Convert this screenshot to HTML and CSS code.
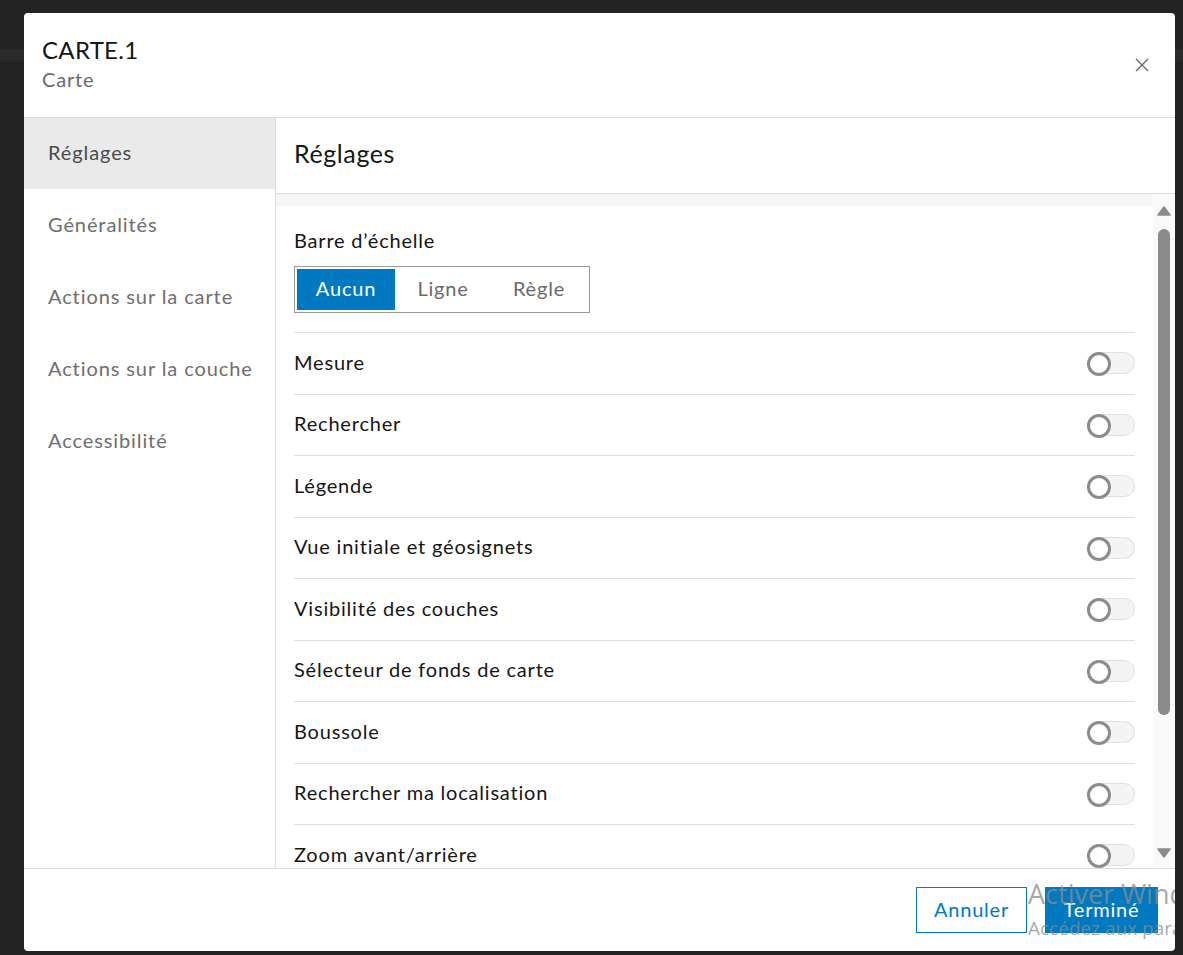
FILE: index.html
```html
<!DOCTYPE html>
<html lang="fr">
<head>
<meta charset="utf-8">
<title>CARTE.1</title>
<link rel="stylesheet" href="styles.css">
</head>
<body>
<div class="backdrop-band"></div>
<div class="dialog">
  <header class="dlg-header">
    <div class="titles">
      <div class="title">CARTE.1</div>
      <div class="subtitle">Carte</div>
    </div>
    <button class="close" aria-label="Fermer">
      <svg width="14" height="14" viewBox="0 0 14 14"><path d="M1 1 L13 13 M13 1 L1 13" stroke="#6a6a6a" stroke-width="1.4" fill="none"/></svg>
    </button>
  </header>
  <div class="dlg-body">
    <nav class="sidebar">
      <div class="nav-item active">Réglages</div>
      <div class="nav-item">Généralités</div>
      <div class="nav-item">Actions sur la carte</div>
      <div class="nav-item">Actions sur la couche</div>
      <div class="nav-item">Accessibilité</div>
    </nav>
    <section class="main">
      <div class="main-header">Réglages</div>
      <div class="scroller">
        <div class="content">
          <div class="strip"></div>
          <div class="inner">
            <div class="scale">
              <div class="label">Barre d’échelle</div>
              <div class="segmented">
                <div class="seg active">Aucun</div>
                <div class="seg">Ligne</div>
                <div class="seg">Règle</div>
              </div>
            </div>
            <div class="row"><span>Mesure</span><span class="toggle"><span class="knob"></span></span></div>
            <div class="row"><span>Rechercher</span><span class="toggle"><span class="knob"></span></span></div>
            <div class="row"><span>Légende</span><span class="toggle"><span class="knob"></span></span></div>
            <div class="row"><span>Vue initiale et géosignets</span><span class="toggle"><span class="knob"></span></span></div>
            <div class="row"><span>Visibilité des couches</span><span class="toggle"><span class="knob"></span></span></div>
            <div class="row"><span>Sélecteur de fonds de carte</span><span class="toggle"><span class="knob"></span></span></div>
            <div class="row"><span>Boussole</span><span class="toggle"><span class="knob"></span></span></div>
            <div class="row"><span>Rechercher ma localisation</span><span class="toggle"><span class="knob"></span></span></div>
            <div class="row"><span>Zoom avant/arrière</span><span class="toggle"><span class="knob"></span></span></div>
            <div class="row"><span>Plein écran</span><span class="toggle"><span class="knob"></span></span></div>
          </div>
        </div>
        <div class="scrollbar">
          <svg class="arrow" width="14" height="10" viewBox="0 0 14 10"><path d="M7 1 L13 9 L1 9 Z" fill="#8b8b8b" stroke="#8b8b8b" stroke-linejoin="round" stroke-width="1.5"/></svg>
          <div class="track"><div class="thumb"></div></div>
          <svg class="arrow" width="14" height="10" viewBox="0 0 14 10"><path d="M1 1 L13 1 L7 9 Z" fill="#8b8b8b" stroke="#8b8b8b" stroke-linejoin="round" stroke-width="1.5"/></svg>
        </div>
      </div>
    </section>
  </div>
  <footer class="dlg-footer">
    <button class="btn btn-outline">Annuler</button>
    <button class="btn btn-primary">Terminé</button>
  </footer>
</div>
<div class="watermark">
  <div class="wm-title">Activer Windows</div>
  <div class="wm-sub">Accédez aux paramètres pour activer Windows.</div>
</div>
</body>
</html>
```
FILE: styles.css
```css
html, body {
  margin: 0;
  padding: 0;
  height: 100%;
  overflow: hidden;
}
body {
  background: #232323;
  font-family: "Lato", "Noto Sans", sans-serif;
  letter-spacing: 0.8px;
  color: #151515;
  padding: 13px 0 0 24px;
  box-sizing: border-box;
  position: relative;
}
.backdrop-band {
  position: absolute;
  left: 0;
  right: 0;
  top: 49px;
  height: 12px;
  background: #2a2a2a;
}
.dialog {
  position: relative;
  width: 1151px;
  height: 938px;
  background: #fff;
  border-radius: 4px;
  display: flex;
  flex-direction: column;
  overflow: hidden;
}
.dlg-header {
  height: 105px;
  flex: none;
  box-sizing: border-box;
  border-bottom: 1px solid #dcdcdc;
  display: flex;
  align-items: center;
  justify-content: space-between;
  padding: 0 26px 3px 18px;
}
.title {
  font-size: 24px;
  line-height: 30px;
  letter-spacing: 0.3px;
  color: #151515;
}
.subtitle {
  font-size: 20px;
  line-height: 26px;
  color: #6a6a6a;
  margin-top: 1px;
}
.close {
  border: 0;
  background: none;
  padding: 0;
  width: 14px;
  height: 14px;
  display: flex;
  margin-top: 3px;
}
.dlg-body {
  flex: none;
  height: 751px;
  box-sizing: border-box;
  border-bottom: 1px solid #dcdcdc;
  display: flex;
}
.sidebar {
  width: 252px;
  flex: none;
  box-sizing: border-box;
  border-right: 1px solid #dcdcdc;
}
.nav-item {
  height: 72px;
  box-sizing: border-box;
  display: flex;
  align-items: center;
  padding: 0 0 3px 24px;
  font-size: 20px;
  letter-spacing: 0.9px;
  color: #6e6e6e;
}
.nav-item.active {
  background: #eaeaea;
  color: #4a4a4a;
  height: 71px;
}
.main {
  flex: 1;
  display: flex;
  flex-direction: column;
  min-width: 0;
}
.main-header {
  height: 76px;
  flex: none;
  box-sizing: border-box;
  border-bottom: 1px solid #dcdcdc;
  display: flex;
  align-items: center;
  padding: 0 0 5px 18px;
  font-size: 25px;
  letter-spacing: 0.6px;
  color: #151515;
}
.scroller {
  flex: 1;
  display: flex;
  min-height: 0;
  overflow: hidden;
}
.content {
  flex: 1;
  min-width: 0;
  overflow: hidden;
}
.strip {
  height: 12px;
  background: #f6f6f6;
}
.inner {
  padding: 0 18px;
}
.scale {
  padding-top: 21px;
  padding-bottom: 19px;
  border-bottom: 1px solid #dedede;
}
.label {
  font-size: 20px;
  line-height: 26px;
  color: #151515;
}
.segmented {
  margin-top: 13px;
  display: inline-flex;
  border: 1px solid #9a9a9a;
  padding: 2px;
}
.seg {
  width: 96px;
  height: 41px;
  box-sizing: border-box;
  padding-bottom: 3px;
  display: flex;
  align-items: center;
  justify-content: center;
  font-size: 20px;
  color: #6a6a6a;
}
.seg.active {
  width: 98px;
  background: #0079c1;
  color: #fff;
}
.row {
  height: 60.5px;
  box-sizing: content-box;
  border-bottom: 1px solid #dedede;
  display: flex;
  align-items: center;
  justify-content: space-between;
  font-size: 20px;
  color: #151515;
}
.row > span:first-child {
  margin-bottom: 3px;
}
.toggle {
  position: relative;
  width: 48px;
  height: 22px;
  box-sizing: border-box;
  border: 1px solid #e0e0e0;
  background: #f4f4f4;
  border-radius: 12px;
}
.knob {
  position: absolute;
  left: -1px;
  top: -1px;
  width: 24px;
  height: 24px;
  box-sizing: border-box;
  border: 3px solid #8c8c8c;
  border-radius: 50%;
  background: #fff;
}
.scrollbar {
  width: 22px;
  flex: none;
  background: #fafafa;
  display: flex;
  flex-direction: column;
  align-items: center;
  padding: 12px 0 10px;
  box-sizing: border-box;
}
.arrow {
  flex: none;
}
.track {
  flex: 1;
  width: 12px;
  padding: 13px 0 0;
}
.thumb {
  width: 12px;
  height: 486px;
  background: #8b8b8b;
  border-radius: 6px;
}
.dlg-footer {
  flex: 1;
  display: flex;
  justify-content: flex-end;
  align-items: flex-start;
  padding: 18px 17px 0 0;
  gap: 18px;
}
.btn {
  height: 46px;
  font-family: inherit;
  font-size: 20px;
  letter-spacing: 0.8px;
  padding: 0 0 3px;
  cursor: pointer;
}
.btn-outline {
  width: 111px;
  background: #fff;
  color: #0079c1;
  border: 1px solid #0079c1;
}
.btn-primary {
  width: 113px;
  background: #0079c1;
  color: #fff;
  border: 1px solid #0079c1;
}
.watermark {
  position: absolute;
  left: 1028px;
  top: 876px;
  width: 147px;
  overflow: hidden;
  white-space: nowrap;
  letter-spacing: 0;
  color: rgba(140, 140, 140, 0.75);
  font-family: "Open Sans", "Noto Sans", sans-serif;
  pointer-events: none;
}
.wm-title {
  font-size: 27px;
  line-height: 36px;
}
.wm-sub {
  font-size: 19px;
  line-height: 24px;
  margin-top: 4px;
}
```
